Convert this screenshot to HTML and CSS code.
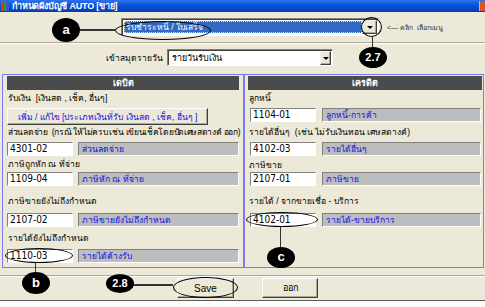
FILE: index.html
```html
<!DOCTYPE html>
<html lang="th">

<head>
    <meta charset="utf-8">
    <link rel="stylesheet" href="styles.css">
</head>

<body>
    <div class="window">
        <div class="titlebar">
            <span class="app-icon"></span>
            <span class="title">กำหนดผังบัญชี AUTO [ขาย]</span>
            <span class="close-btn"></span>
        </div>

        <div class="menu-row">
            <div class="combo combo-main">
                <span class="combo-value selected">รับชำระหนี้ / ใบเสร็จ</span>
                <span class="combo-btn"></span>
            </div>
            <span class="hint">&lt;— คลิก&nbsp; เลือกเมนู</span>
        </div>

        <div class="separator"></div>

        <div class="journal-row">
            <label class="journal-label">เข้าสมุดรายวัน</label>
            <div class="combo combo-journal">
                <span class="combo-value">รายวันรับเงิน</span>
                <span class="combo-btn"></span>
            </div>
        </div>

        <div class="panels">
            <div class="panel panel-debit">
                <div class="panel-head">เดบิต</div>
                <div class="field-label mt-1">รับเงิน&nbsp; [เงินสด , เช็ค, อื่นๆ]</div>
                <button class="edit-btn">เพิ่ม / แก้ไข [ประเภทเงินที่รับ เงินสด , เช็ค, อื่นๆ ]</button>
                <div class="field-label tight">ส่วนลดจ่าย&nbsp; (กรณี ให้ไม่ครบ เช่น เขียนเช็คโดยปัดเศษสตางค์ ออก)</div>
                <div class="field-row mt-3">
                    <span class="code-box">4301-02</span>
                    <span class="name-box">ส่วนลดจ่าย</span>
                </div>
                <div class="field-label mt-1">ภาษีถูกหัก ณ ที่จ่าย</div>
                <div class="field-row mt-1">
                    <span class="code-box">1109-04</span>
                    <span class="name-box">ภาษีหัก ณ ที่จ่าย</span>
                </div>
                <div class="field-label mt-8">ภาษีขายยังไม่ถึงกำหนด</div>
                <div class="field-row mt-5">
                    <span class="code-box">2107-02</span>
                    <span class="name-box">ภาษีขายยังไม่ถึงกำหนด</span>
                </div>
                <div class="field-label mt-4">รายได้ยังไม่ถึงกำหนด</div>
                <div class="field-row mt-4">
                    <span class="code-box">1110-03</span>
                    <span class="name-box">รายได้ค้างรับ</span>
                </div>
            </div>

            <div class="panel panel-credit">
                <div class="panel-head">เครดิต</div>
                <div class="field-label mt-1">ลูกหนี้</div>
                <div class="field-row mt-3">
                    <span class="code-box">1104-01</span>
                    <span class="name-box">ลูกหนี้-การค้า</span>
                </div>
                <div class="field-label mt-3">รายได้อื่นๆ&nbsp; (เช่น ไม่รับเงินทอน เศษสตางค์)</div>
                <div class="field-row mt-3">
                    <span class="code-box">4102-03</span>
                    <span class="name-box">รายได้อื่นๆ</span>
                </div>
                <div class="field-label mt-2">ภาษีขาย</div>
                <div class="field-row">
                    <span class="code-box">2107-01</span>
                    <span class="name-box">ภาษีขาย</span>
                </div>
                <div class="field-label mt-8">รายได้ / จากขายเชื่อ - บริการ</div>
                <div class="field-row mt-5">
                    <span class="code-box">4102-01</span>
                    <span class="name-box">รายได้-ขายบริการ</span>
                </div>
            </div>
        </div>

        <div class="footer">
            <button class="cmd-btn btn-save">Save</button>
            <button class="cmd-btn btn-exit">ออก</button>
        </div>

        <!-- callouts drawn over the form -->
        <span class="ring ring-menu"></span>
        <span class="link link-a"></span>
        <span class="badge badge-a">a</span>

        <span class="ring ring-drop"></span>
        <span class="link link-27"></span>
        <span class="badge badge-27">2.7</span>

        <span class="ring ring-b"></span>
        <span class="link link-b"></span>
        <span class="badge badge-b">b</span>

        <span class="ring ring-c"></span>
        <span class="link link-c"></span>
        <span class="badge badge-c">c</span>

        <span class="ring ring-save"></span>
        <span class="link link-28"></span>
        <span class="badge badge-28">2.8</span>
    </div>
</body>

</html>
```

FILE: styles.css
```css
* {
    box-sizing: border-box;
}

body {
    margin: 0;
    padding: 0;
    background-color: #FFFFFF;
    font-family: "Liberation Sans", "DejaVu Sans", sans-serif;
    font-size: 10px;
    color: #000000;
}

.window {
    position: relative;
    width: 485px;
    height: 301px;
    background-color: #ECE9D8;
    border-bottom: 1px solid #5A5A5A;
}

.titlebar {
    position: relative;
    height: 12px;
    display: flex;
    align-items: center;
    background: linear-gradient(#2F72EC, #0A54DE 40%, #0547C8 75%, #0A3C9E);
}

.app-icon {
    width: 8px;
    height: 9px;
    margin-left: 1px;
    background: linear-gradient(90deg, #D23A1E 0 33%, #2E9A2E 33% 66%, #2E5ED8 66%);
}

.title {
    margin-left: 3px;
    color: #FFFFFF;
    font-weight: bold;
    font-size: 9px;
    letter-spacing: -0.2px;
    line-height: 12px;
}

.close-btn {
    position: absolute;
    right: 0;
    top: 1px;
    width: 6px;
    height: 10px;
    background: #D8532B;
    border-left: 1px solid #F2A98F;
}

.menu-row {
    display: flex;
    align-items: center;
    margin-top: 6px;
    padding-left: 121px;
}

.combo {
    display: flex;
    background: #FFFFFF;
    border: 1px solid;
    border-color: #808080 #FFFFFF #FFFFFF #808080;
    box-shadow: inset 1px 1px 0 #404040;
}

.combo-main {
    width: 258px;
    height: 18px;
    padding: 2px 1px 2px 2px;
}

.combo-journal {
    width: 166px;
    height: 17px;
    padding: 2px 1px 1px 2px;
}

.combo-value {
    flex: 1;
    padding-left: 2px;
    font-size: 9px;
    line-height: 12px;
    white-space: nowrap;
}

.combo-value.selected {
    font-size: 8.5px;
    background: #316AC5;
    color: #FFFFFF;
    outline: 1px dotted #F2E7A8;
    outline-offset: -1px;
}

.combo-btn {
    position: relative;
    width: 15px;
    margin-top: -1px;
    margin-bottom: -1px;
    background: #ECE9D8;
    border: 1px solid;
    border-color: #F4F3EE #404040 #404040 #F4F3EE;
    box-shadow: inset -1px -1px 0 #ACA899;
}

.combo-btn::after {
    content: "";
    position: absolute;
    left: 4px;
    top: 5px;
    border-left: 3px solid transparent;
    border-right: 3px solid transparent;
    border-top: 3px solid #000000;
}

.combo-journal .combo-btn {
    width: 11px;
}

.combo-journal .combo-btn::after {
    left: 2px;
}

.hint {
    margin-left: 8px;
    font-size: 7px;
    color: #333333;
    white-space: nowrap;
}

.separator {
    margin-top: 6px;
    height: 2px;
    border-top: 1px solid #ACA899;
    border-bottom: 1px solid #FFFFFF;
}

.journal-row {
    display: flex;
    align-items: center;
    margin-top: 5px;
    padding-left: 100px;
}

.journal-label {
    width: 63px;
    margin-right: 4px;
    text-align: right;
    font-size: 8.5px;
}

.panels {
    display: flex;
    margin-top: 8px;
    padding-left: 2px;
}

.panel {
    display: flex;
    flex-direction: column;
    height: 194px;
    border: 1px solid #7C7CF0;
    padding-top: 1px;
}

.panel-debit {
    width: 242px;
    padding-left: 4px;
    padding-right: 4px;
}

.panel-credit {
    width: 240px;
    padding-left: 3px;
    padding-right: 1px;
}

.panel-head {
    height: 14px;
    line-height: 14px;
    background: #4B4B4B;
    color: #FFFFFF;
    font-weight: bold;
    text-align: center;
    font-size: 9px;
}

.field-label {
    height: 14px;
    line-height: 14px;
    padding-left: 1px;
    font-size: 8.5px;
    white-space: nowrap;
}

.field-label.tight {
    letter-spacing: -0.3px;
}

.edit-btn {
    width: 201px;
    height: 17px;
    margin-top: 3px;
    padding: 0;
    font-family: inherit;
    font-size: 8.5px;
    color: #1010E8;
    background: #ECE9D8;
    border: 1px solid;
    border-color: #FFFFFF #404040 #404040 #FFFFFF;
    box-shadow: inset -1px -1px 0 #ACA899;
}

.field-row {
    display: flex;
    height: 14px;
}

.panel-debit .field-row {
    gap: 5px;
}

.panel-credit .field-row {
    gap: 6px;
    padding-left: 2px;
    padding-right: 1px;
}

.code-box,
.name-box {
    height: 14px;
    line-height: 12px;
    border: 1px solid;
    border-color: #808080 #FFFFFF #FFFFFF #808080;
    white-space: nowrap;
    overflow: hidden;
}

.code-box {
    width: 66px;
    padding-left: 2px;
    background: #FFFFFF;
    font-family: "Liberation Sans Narrow", "DejaVu Sans Condensed", sans-serif;
    font-size: 10px;
}

.name-box {
    flex: 1;
    padding-left: 3px;
    background: #BDBDBD;
    color: #1010E8;
    font-size: 8.5px;
}

.mt-1 { margin-top: 1px; }
.mt-2 { margin-top: 2px; }
.mt-3 { margin-top: 3px; }
.mt-4 { margin-top: 4px; }
.mt-5 { margin-top: 5px; }
.mt-8 { margin-top: 8px; }

.footer {
    display: flex;
    gap: 28px;
    margin-top: 7px;
    padding-top: 1px;
    padding-left: 177px;
    border-top: 1px solid #ACA899;
    box-shadow: inset 0 1px 0 #FFFFFF;
}

.cmd-btn {
    width: 57px;
    height: 20px;
    margin-top: 1px;
    padding: 0;
    font-family: inherit;
    font-size: 10px;
    color: #000000;
    background: #ECE9D8;
    border: 1px solid;
    border-color: #FFFFFF #404040 #404040 #FFFFFF;
    box-shadow: inset -1px -1px 0 #ACA899;
}

.btn-exit {
    width: 56px;
    font-size: 9px;
}

/* callouts */
.ring {
    position: absolute;
    border: 1px solid #000000;
    border-radius: 50%;
}

.link {
    position: absolute;
    background: #333333;
}

.badge {
    position: absolute;
    width: 28px;
    height: 22px;
    border-radius: 50%;
    background: #000000;
    color: #FFFFFF;
    font-weight: bold;
    font-size: 11px;
    line-height: 22px;
    text-align: center;
}

.ring-menu { left: 115px; top: 21px; width: 96px; height: 19px; }
.link-a { left: 80px; top: 29px; width: 36px; height: 2px; }
.badge-a { left: 52px; top: 18px; height: 24px; line-height: 23px; font-size: 13px; }

.ring-drop { left: 361px; top: 17px; width: 21px; height: 20px; }
.link-27 { left: 372px; top: 37px; width: 1px; height: 10px; }
.badge-27 { left: 359px; top: 47px; height: 21px; line-height: 21px; }

.ring-b { left: 5px; top: 248px; width: 68px; height: 15px; }
.link-b { left: 35px; top: 263px; width: 1px; height: 10px; }
.badge-b { left: 22px; top: 272px; height: 22px; font-size: 13px; }

.ring-c { left: 246px; top: 212px; width: 72px; height: 15px; }
.link-c { left: 280px; top: 227px; width: 1px; height: 20px; }
.badge-c { left: 267px; top: 247px; height: 21px; line-height: 20px; font-size: 13px; }

.ring-save { left: 173px; top: 277px; width: 65px; height: 21px; }
.link-28 { left: 133px; top: 284px; width: 40px; height: 2px; }
.badge-28 { left: 106px; top: 274px; height: 19px; line-height: 19px; }
```
